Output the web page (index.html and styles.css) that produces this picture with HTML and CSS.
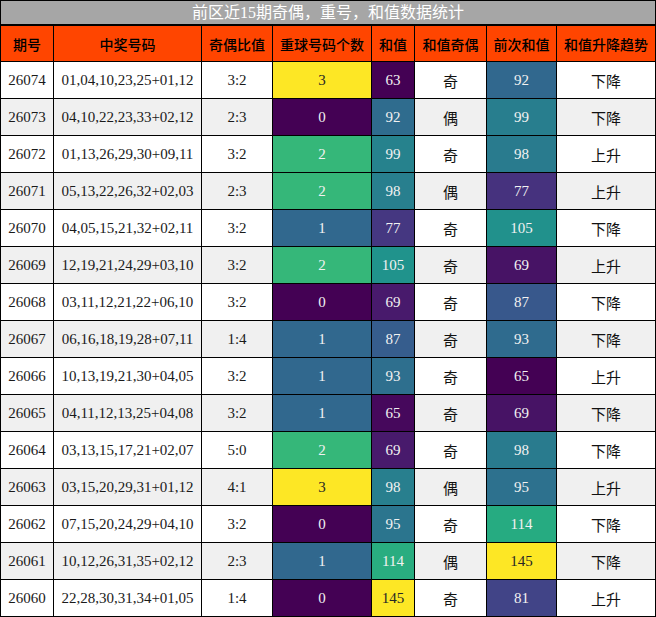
FILE: index.html
```html
<!DOCTYPE html>
<html lang="zh">
<head>
<meta charset="utf-8">
<title>前区近15期奇偶，重号，和值数据统计</title>
<link rel="stylesheet" href="styles.css">
</head>
<body>
<div class="grid">
  <div class="title">前区近15期奇偶，重号，和值数据统计</div>
  <div class="th">期号</div><div class="th">中奖号码</div><div class="th">奇偶比值</div><div class="th">重球号码个数</div><div class="th">和值</div><div class="th">和值奇偶</div><div class="th">前次和值</div><div class="th">和值升降趋势</div>

  <div class="td">26074</div><div class="td">01,04,10,23,25+01,12</div><div class="td">3:2</div><div class="td dark-t" style="background:#fde725">3</div><div class="td light" style="background:#440154">63</div><div class="td cn">奇</div><div class="td light" style="background:#31688e">92</div><div class="td cn">下降</div>
  <div class="td alt">26073</div><div class="td alt">04,10,22,23,33+02,12</div><div class="td alt">2:3</div><div class="td light" style="background:#440154">0</div><div class="td light" style="background:#2f6c8e">92</div><div class="td cn alt">偶</div><div class="td light" style="background:#287e8e">99</div><div class="td cn alt">下降</div>
  <div class="td">26072</div><div class="td">01,13,26,29,30+09,11</div><div class="td">3:2</div><div class="td light" style="background:#35b779">2</div><div class="td light" style="background:#26828d">99</div><div class="td cn">奇</div><div class="td light" style="background:#297b8e">98</div><div class="td cn">上升</div>
  <div class="td alt">26071</div><div class="td alt">05,13,22,26,32+02,03</div><div class="td alt">2:3</div><div class="td light" style="background:#35b779">2</div><div class="td light" style="background:#287f8e">98</div><div class="td cn alt">偶</div><div class="td light" style="background:#46327e">77</div><div class="td cn alt">上升</div>
  <div class="td">26070</div><div class="td">04,05,15,21,32+02,11</div><div class="td">3:2</div><div class="td light" style="background:#31688e">1</div><div class="td light" style="background:#453781">77</div><div class="td cn">奇</div><div class="td light" style="background:#21918c">105</div><div class="td cn">下降</div>
  <div class="td alt">26069</div><div class="td alt">12,19,21,24,29+03,10</div><div class="td alt">3:2</div><div class="td light" style="background:#35b779">2</div><div class="td light" style="background:#20938c">105</div><div class="td cn alt">奇</div><div class="td light" style="background:#471365">69</div><div class="td cn alt">上升</div>
  <div class="td">26068</div><div class="td">03,11,12,21,22+06,10</div><div class="td">3:2</div><div class="td light" style="background:#440154">0</div><div class="td light" style="background:#481a6c">69</div><div class="td cn">奇</div><div class="td light" style="background:#38588c">87</div><div class="td cn">下降</div>
  <div class="td alt">26067</div><div class="td alt">06,16,18,19,28+07,11</div><div class="td alt">1:4</div><div class="td light" style="background:#31688e">1</div><div class="td light" style="background:#365d8d">87</div><div class="td cn alt">奇</div><div class="td light" style="background:#2f6b8e">93</div><div class="td cn alt">下降</div>
  <div class="td">26066</div><div class="td">10,13,19,21,30+04,05</div><div class="td">3:2</div><div class="td light" style="background:#31688e">1</div><div class="td light" style="background:#2e6f8e">93</div><div class="td cn">奇</div><div class="td light" style="background:#440154">65</div><div class="td cn">上升</div>
  <div class="td alt">26065</div><div class="td alt">04,11,12,13,25+04,08</div><div class="td alt">3:2</div><div class="td light" style="background:#31688e">1</div><div class="td light" style="background:#46085c">65</div><div class="td cn alt">奇</div><div class="td light" style="background:#471365">69</div><div class="td cn alt">下降</div>
  <div class="td">26064</div><div class="td">03,13,15,17,21+02,07</div><div class="td">5:0</div><div class="td light" style="background:#35b779">2</div><div class="td light" style="background:#481a6c">69</div><div class="td cn">奇</div><div class="td light" style="background:#297b8e">98</div><div class="td cn">下降</div>
  <div class="td alt">26063</div><div class="td alt">03,15,20,29,31+01,12</div><div class="td alt">4:1</div><div class="td dark-t" style="background:#fde725">3</div><div class="td light" style="background:#287f8e">98</div><div class="td cn alt">偶</div><div class="td light" style="background:#2d718e">95</div><div class="td cn alt">上升</div>
  <div class="td">26062</div><div class="td">07,15,20,24,29+04,10</div><div class="td">3:2</div><div class="td light" style="background:#440154">0</div><div class="td light" style="background:#2b758e">95</div><div class="td cn">奇</div><div class="td light" style="background:#26ab81">114</div><div class="td cn">下降</div>
  <div class="td alt">26061</div><div class="td alt">10,12,26,31,35+02,12</div><div class="td alt">2:3</div><div class="td light" style="background:#31688e">1</div><div class="td light" style="background:#29ad80">114</div><div class="td cn alt">偶</div><div class="td dark-t" style="background:#fde725">145</div><div class="td cn alt">下降</div>
  <div class="td">26060</div><div class="td">22,28,30,31,34+01,05</div><div class="td">1:4</div><div class="td light" style="background:#440154">0</div><div class="td dark-t" style="background:#fde725">145</div><div class="td cn">奇</div><div class="td light" style="background:#414487">81</div><div class="td cn">上升</div>
</div>
</body>
</html>
```

FILE: styles.css
```css
html, body {
  margin: 0;
  padding: 0;
  background: #ffffff;
}

.grid {
  display: grid;
  grid-template-columns: 52px 147px 70px 98px 42px 71px 69px 98px;
  grid-template-rows: 24px 35px repeat(15, 36px);
  gap: 1px;
  padding: 1px;
  background: #000000;
  width: 656px;
  box-sizing: border-box;
  font-family: "Liberation Serif", "Noto Sans CJK SC", serif;
}

.title {
  grid-column: 1 / -1;
  background: #a6a6a6;
  color: #ffffff;
  font-size: 16px;
  display: flex;
  align-items: center;
  justify-content: center;
  line-height: 1;
  box-sizing: border-box;
  border-bottom: 1px solid #000000;
  padding-top: 1px;
}

.th {
  background: #ff4500;
  color: #000000;
  font-family: "Noto Sans CJK SC", sans-serif;
  font-size: 14px;
  font-weight: 500;
  display: flex;
  align-items: center;
  justify-content: center;
  white-space: nowrap;
}

.td {
  background: #ffffff;
  color: #1a1a1a;
  font-size: 15px;
  display: flex;
  align-items: center;
  justify-content: center;
  white-space: nowrap;
}

.td.alt {
  background: #f0f0f0;
}

.td.cn {
  font-family: "Noto Sans CJK SC", sans-serif;
  font-size: 15px;
  color: #111111;
}

.td.light {
  color: #f2f2f2;
}

.td.dark-t {
  color: #262626;
}
```
